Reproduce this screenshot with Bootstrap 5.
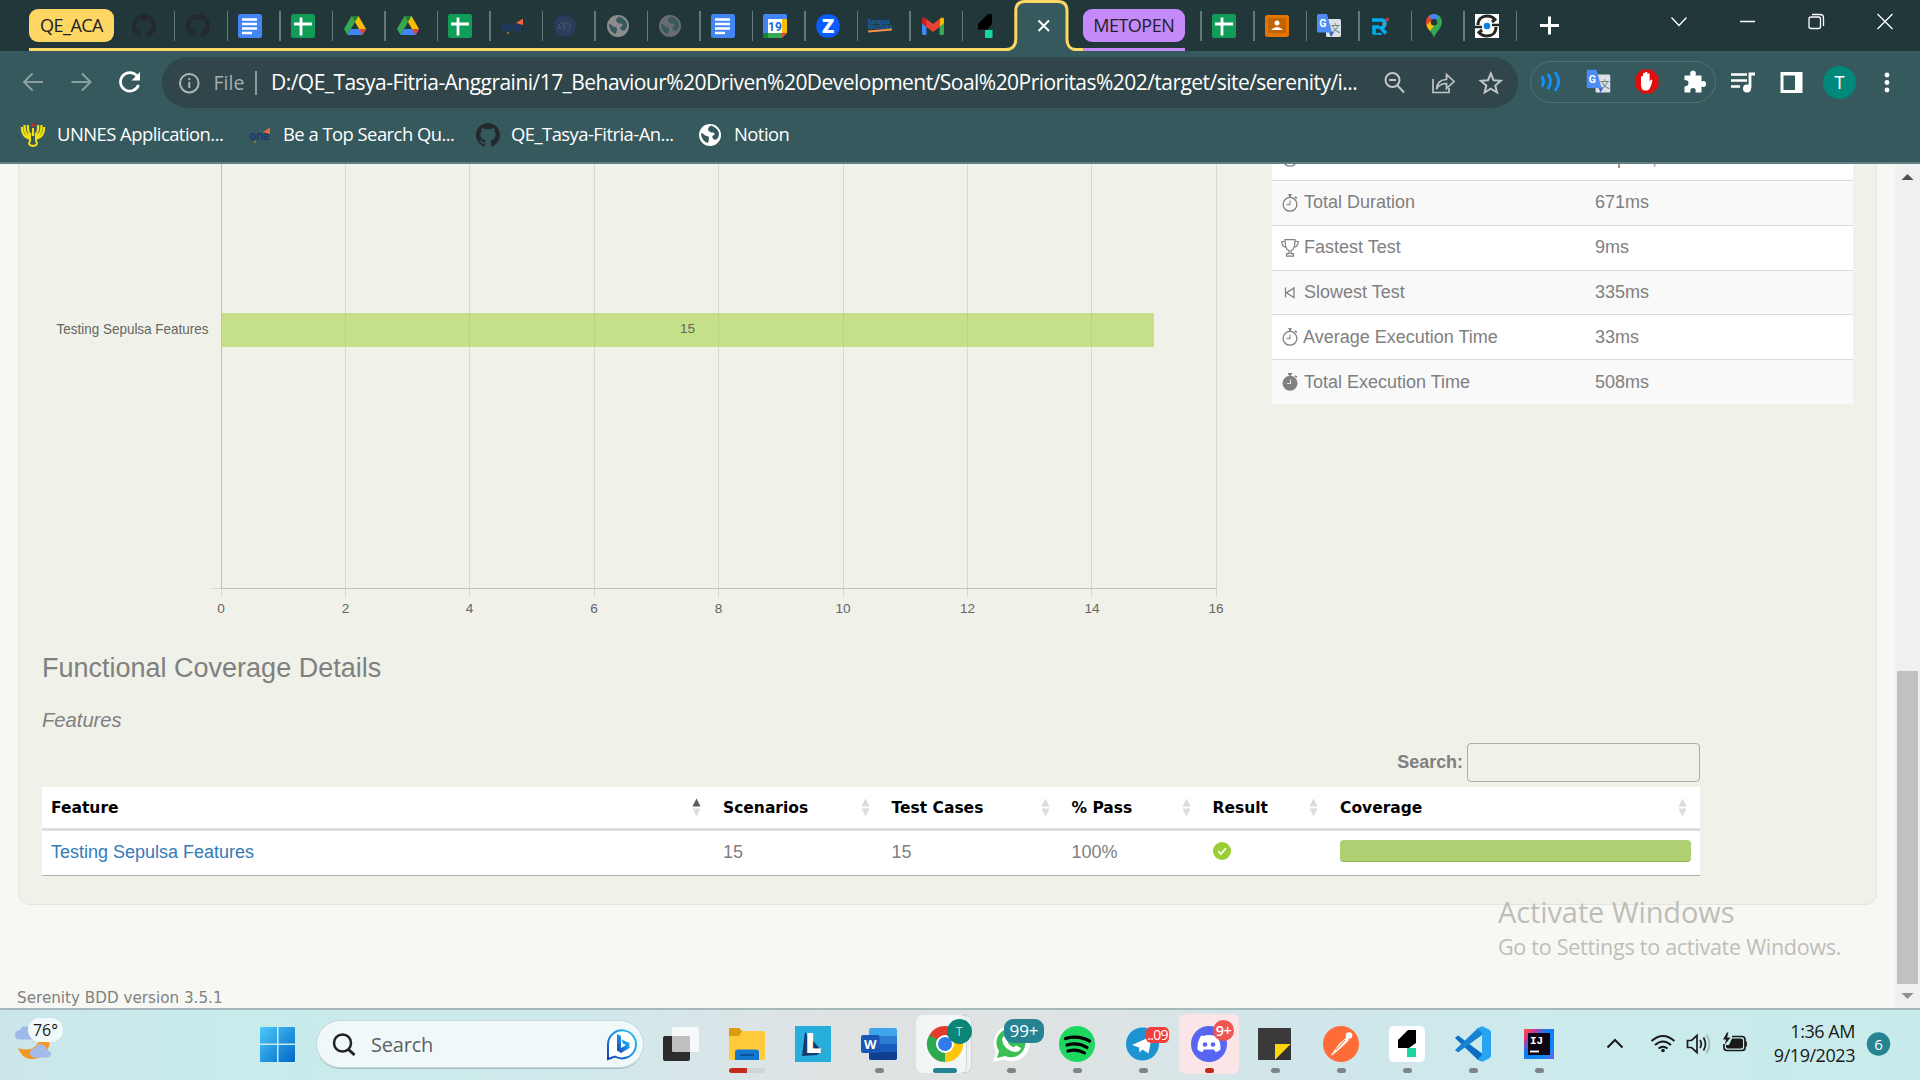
<!DOCTYPE html>
<html lang="en">
<head>
<meta charset="utf-8">
<title>Serenity Reports</title>
<link href="https://cdn.jsdelivr.net/npm/bootstrap@5.3.0/dist/css/bootstrap.min.css" rel="stylesheet">
<style>
body{width:1920px;height:1080px;overflow:hidden;font-family:"Open Sans","Noto Sans",sans-serif;background:#f7f8f3}
svg{display:block;flex:none;overflow:visible}
.strip{height:51px;background:#21373a}
.grp{height:51px;border-bottom:3px solid #fdd663}
.grp.violet{border-color:#c58af9}
.chip{height:33px;margin-top:9px;border-radius:9px;font-size:18px;line-height:33px;color:#202124;text-align:center;letter-spacing:-.5px;white-space:nowrap;flex:none}
.chip-y{width:85px;background:#fdd663;margin-right:8px}
.chip-v{width:101.5px;background:#c58af9}
.tabi{width:52.5px;height:51px;flex:none;padding:14px 0 0 11.4px;position:relative}
.tabi::after{content:"";position:absolute;right:-1px;top:11px;width:1.5px;height:30px;background:#66777a}
.tabi.nosep::after{display:none}
.tabi.nosep:nth-child(2){padding-left:10px}
.tabi.first::before{content:"";position:absolute;left:-1px;top:11px;width:1.5px;height:30px;background:#66777a}
.bar{height:62px;background:#36595d}
.omni{width:1356px;height:51px;border-radius:26px;background:#30464a;color:#fff;font-size:21px}
.url{width:1088px;letter-spacing:-.535px;white-space:nowrap;padding-top:2px}
.ext{width:186px;height:42px;border:1.5px solid #547175;border-radius:21px}
.marks{height:51px;background:#36595d;border-bottom:2px solid #628084;color:#fff;font-size:18.4px;letter-spacing:-.52px}
.marks span{white-space:nowrap;margin-top:-1px}
.view{height:844px;overflow:hidden;background:#f7f8f3;color:#808080;font-family:"Liberation Sans",Arial,sans-serif}
.panel{width:1859px;height:741px;margin-left:18px;padding-left:23px;background:#f0f1e8;border:1px solid #e4e5df;border-top:0;border-radius:0 0 12px 12px}
.facts{width:581px;height:240px;font-size:18px}
.facts .fact{height:44.8px;flex:none;background:#fff;border-top:1px solid #dcdcdc;padding-left:9px}
.facts .fact:nth-child(even){background:#f9f9f9}
.fact-name{width:314px}
.head3{font-size:27px;line-height:40px;height:40px}
.head4{font-size:20.2px;line-height:30px;margin-top:17px;font-style:italic;height:30px}
.find{width:1658px;margin-top:8px;height:39px;font-size:17.9px;font-weight:700}
.find-box{width:233px;height:39px;border:1px solid #aaa;border-radius:4px;background:transparent}
.grid{width:1658px;margin-top:5px;background:#fff;border-bottom:1px solid #abafab;font-size:18px}
.grid-head{height:44px;border-bottom:3px solid #ddd;color:#000;font:bold 15.5px "DejaVu Sans",sans-serif}
.grid-head>div,.grid-row>div{padding:0 9px;flex:none}
.grid-row{height:44px;padding-bottom:1px}
.c1{width:672px}.c2{width:168.5px}.c3{width:180px}.c4{width:141px}.c5{width:127.5px}.c6{width:369px}
.cov{height:22px;margin-top:-3px;border-radius:4px;background:#b0ce72;border-bottom:1.5px solid #95b35a;width:351px}
.foot{margin:82px 0 0 17px;font:15.2px/22px "DejaVu Sans",sans-serif;white-space:nowrap}
.sbar{width:25px;background:#f0f0f1}
.thumb{width:21px;height:313px;background:#c1c1c1;margin-top:488px}
.wm{position:absolute;left:1498px;top:890px;color:#bdbeba;white-space:nowrap}
.wm-a{font-size:29px;line-height:44px;letter-spacing:-.1px}
.wm-b{font-size:21.5px;line-height:26px;letter-spacing:-.26px}
.task{height:72px;border-top:2px solid #a7b8ba;background:linear-gradient(90deg,#cbe6ea 0,#c8ebec 12%,#cfe9eb 30%,#d9e5e8 37%,#e0e2e2 45%,#dde4e5 58%,#cfe6ea 68%,#cdeaec 80%,#c7ebeb 100%)}
.tk{width:66px;height:70px;flex:none;padding-top:8px;position:relative}
.dot{position:absolute;left:28.5px;top:58px;width:9px;height:5px;border-radius:3px;background:#7d8585}
.tile{position:absolute;border-radius:7px}
.pill{width:326px;height:46px;border-radius:23px;background:#f0f8fa;box-shadow:0 0 0 1px #c3d9dc,0 2px 0 #a9bfc1;font-size:20px;color:#5c6264;margin-left:22px}
.bdg{position:absolute;color:#fff;text-align:center;white-space:nowrap}
.clock{font-size:18px;line-height:24px;color:#1a1a1a;text-align:right;width:91px;letter-spacing:-.45px}
</style>
<script src="https://cdn.jsdelivr.net/npm/bootstrap@5.3.0/dist/js/bootstrap.bundle.min.js"></script>
</head>
<body class="d-flex flex-column m-0">
<svg width="0" height="0" class="position-absolute">
<defs>
<symbol id="gh" viewBox="0 0 16 16"><path d="M8 0C3.58 0 0 3.58 0 8c0 3.54 2.29 6.53 5.47 7.59.4.07.55-.17.55-.38v-1.49c-2.01.37-2.53-.49-2.69-.94-.09-.23-.48-.94-.82-1.13-.28-.15-.68-.52-.01-.53.63-.01 1.08.58 1.23.82.72 1.21 1.87.87 2.33.66.07-.52.28-.87.51-1.07-1.78-.2-3.64-.89-3.64-3.95 0-.87.31-1.59.82-2.15-.08-.2-.36-1.02.08-2.12 0 0 .67-.21 2.2.82a7.6 7.6 0 0 1 4 0c1.53-1.04 2.2-.82 2.2-.82.44 1.1.16 1.92.08 2.12.51.56.82 1.27.82 2.15 0 3.07-1.87 3.75-3.65 3.95.29.25.54.73.54 1.48v2.2c0 .21.15.46.55.38A8 8 0 0 0 16 8c0-4.42-3.58-8-8-8z"/></symbol>
<symbol id="docs" viewBox="0 0 24 24"><rect width="24" height="24" rx="2.5" fill="#4285f4"/><path d="M4 5.5h15M4 10h15M4 14.5h15M4 19h10" stroke="#fff" stroke-width="2.3"/></symbol>
<symbol id="sheet" viewBox="0 0 24 24"><rect width="24" height="24" rx="2.5" fill="#0f9d58"/><path d="M10 3.5v18M3 10h18" stroke="#fff" stroke-width="2.8"/></symbol>
<symbol id="drive" viewBox="0 0 24 24"><path d="M8.5 2 1 15l3.5 6L12 8z" fill="#34a853"/><path d="M8.5 2h7L23 15h-7z" fill="#fbbc04"/><path d="M8.500 2h7L12 8z" fill="#188038"/><path d="M8 15h15l-3.500 6h-15z" fill="#4285f4"/><path d="M16 15h7l-3.500 6z" fill="#ea4335"/></symbol>
<symbol id="globe" viewBox="0 0 24 24"><circle cx="12" cy="12" r="11"/><path d="M3 10c3 0 3 3 6 3s2 4 1 7c-4-1-7-5-7-10zM13 2.500c-3 2-4 4-1.500 6s4 0 5 2-3 1.500-2 4 3 3 5 1c3-4 2-10-6.500-13z" fill="#36595d"/></symbol>
<symbol id="trans" viewBox="0 0 24 24"><rect x="9" y="5" width="15" height="18" rx="1.500" fill="#dcdfe3"/><path d="M14 23l3-5h-5z" fill="#3a57c4"/><path d="M1.500 0H10l5 18.500H1.500Q0 18.500 0 17V1.500Q0 0 1.500 0z" fill="#4d8bf5"/><text x="2.200" y="13" font-family="Roboto,sans-serif" font-weight="700" font-size="10.500" fill="#fff">G</text><text x="13.300" y="18" font-family="Noto Sans CJK SC,sans-serif" font-size="10" fill="#607d8b">文</text></symbol>
<symbol id="one" viewBox="0 0 24 24"><text x="1" y="17" font-family="Open Sans,sans-serif" font-weight="700" font-size="11.500" textLength="20" lengthAdjust="spacingAndGlyphs" fill="#1d3a74">one</text><path d="M15 9l7-4.500V11z" fill="#f0643a"/><circle cx="7" cy="19" r="1" fill="#b08030"/></symbol>
<symbol id="kata" viewBox="0 0 24 24"><path d="M5 10 15 0h4v10L14 15.500H5z" fill="#000"/><path d="M12 16h7.500v8H12z" fill="#17d6a0"/></symbol>
<symbol id="sw" viewBox="0 0 16 18"><circle cx="8" cy="10.300" r="6.900" fill="none" stroke="#808080" stroke-width="1.300"/><path d="M6.500.8h3M8 1v2.200M13 2.800l1.800 1.600" stroke="#808080" stroke-width="1.700"/><path d="M8 6.500v4H4.500" fill="none" stroke="#999" stroke-width="1.300"/></symbol>
<symbol id="sort" viewBox="0 0 10 20"><path d="M5 0l4.500 9h-9z" fill="#dcdcdc"/><path d="M5 20l4.500-9h-9z" fill="#dcdcdc"/></symbol>
</defs>
</svg>

<!-- Tab strip -->
<div class="strip d-flex">
  <div class="grp d-flex" style="margin-left:29px">
    <div class="chip chip-y">QE_ACA</div>
    <div class="tabi nosep"><svg width="24" height="24" fill="#24292e"><use href="#gh"/></svg></div>
    <div class="tabi first"><svg width="24" height="24" fill="#24292e"><use href="#gh"/></svg></div>
    <div class="tabi"><svg width="24" height="24"><use href="#docs"/></svg></div>
    <div class="tabi"><svg width="24" height="24"><use href="#sheet"/></svg></div>
    <div class="tabi"><svg width="24" height="24"><use href="#drive"/></svg></div>
    <div class="tabi"><svg width="24" height="24"><use href="#drive"/></svg></div>
    <div class="tabi"><svg width="24" height="24"><use href="#sheet"/></svg></div>
    <div class="tabi"><svg width="24" height="24"><use href="#one"/></svg></div>
    <div class="tabi"><svg width="24" height="24" viewBox="0 0 24 24"><circle cx="12" cy="12" r="11.500" fill="#2b3d5b"/><circle cx="12" cy="12" r="11" fill="none" stroke="#1c2b42" stroke-dasharray="1.500 2"/><path d="M6 15c-1-5 2-8 4-6s-1 5-3 5m5-6c0 5 0 8-2 9m4-8c2-1 3 1 3 4s-2 4-3 3" stroke="#52627c" stroke-dasharray="2 1" fill="none"/></svg></div>
    <div class="tabi"><svg width="24" height="24" fill="#8c8c8c"><use href="#globe"/></svg></div>
    <div class="tabi"><svg width="24" height="24" fill="#686c6e"><use href="#globe"/></svg></div>
    <div class="tabi"><svg width="24" height="24"><use href="#docs"/></svg></div>
    <div class="tabi"><svg width="24" height="24" viewBox="0 0 24 24"><path d="M0 2q0-2 2-2h20q2 0 2 2v17l-5 5H2q-2 0-2-2z" fill="#4285f4"/><path d="M19 5h5v14h-5z" fill="#fbbc04"/><path d="M5 19h14v5H2q-2 0-2-2v-3z" fill="#188038"/><path d="M5 19h14v5H5z" fill="#34a853"/><path d="M19 19h5l-5 5z" fill="#ea4335"/><path d="M5 5h14v14H5z" fill="#fff"/><text x="12" y="16.500" text-anchor="middle" font-family="Roboto,sans-serif" font-weight="700" font-size="12" fill="#1a66d6">19</text></svg></div>
    <div class="tabi"><svg width="24" height="24" viewBox="0 0 24 24"><rect x=".3" y=".3" width="23.400" height="23.400" rx="10.500" fill="#0b5cff"/><text x="12" y="19" text-anchor="middle" font-family="Open Sans,sans-serif" font-weight="800" font-size="20" fill="#fff">Z</text></svg></div>
    <div class="tabi"><svg width="24" height="24" viewBox="0 0 24 24"><g font-family="Open Sans,sans-serif" font-weight="700" font-size="7" fill="#1466ae"><text x="0" y="10" textLength="22" lengthAdjust="spacingAndGlyphs">Kampus</text><text x="0" y="15" textLength="24" lengthAdjust="spacingAndGlyphs">Merdeka</text></g><path d="M0 17.500 24 15.500" stroke="#f0924c" stroke-width="2"/></svg></div>
    <div class="tabi"><svg width="24" height="24" viewBox="0 0 24 24"><path d="M1 5.500 5.500 9v12H2.500Q1 21 1 19.500z" fill="#4285f4"/><path d="M18.500 9 23 5.500v14Q23 21 21.500 21h-3z" fill="#34a853"/><path d="M18.500 5l2-1.300Q23 3 23 6v3l-4.500 4z" fill="#fbbc04"/><path d="M1 9V6q0-3.500 3-2l8 6 6.500-5v8L12 18l-6.500-5z" fill="#ea4335"/><path d="M1 6q0-4 4.500-1v8L1 9.500z" fill="#c5221f"/></svg></div>
    <div class="tabi nosep" style="width:44px"><svg width="24" height="24"><use href="#kata"/></svg></div>
  </div>
  <svg width="77" height="51" viewBox="0 0 77 51"><path d="M0 51v-1.500C6 49.500 9.800 46 9.800 39V11Q9.800 1.500 19 1.500h33q9 0 9 9.500v28c0 7 4 10.500 9 10.500h7V51z" fill="#36595d"/><path d="M0 49.500C6 49.500 9.800 46 9.800 39V11Q9.800 1.500 19 1.500h33q9 0 9 9.500v28c0 7 4 10.500 9 10.500h7" fill="none" stroke="#fdd663" stroke-width="3"/><path d="M32.500 20.500l10.500 10.500M43 20.500 32.500 31" stroke="#fff" stroke-width="2"/></svg>
  <div class="grp violet"><div class="chip chip-v">METOPEN</div></div>
  <div class="d-flex" style="margin-left:16.500px">
    <div class="tabi first"><svg width="24" height="24"><use href="#sheet"/></svg></div>
    <div class="tabi"><svg width="24" height="24" viewBox="0 0 24 24"><rect y="1" width="24" height="22" rx="2.500" fill="#e37400"/><rect x="3" y="4" width="18" height="15" fill="#c26401"/><circle cx="12" cy="9" r="2.500" fill="#fff"/><path d="M6 16q6-6 12 0z" fill="#fff"/></svg></div>
    <div class="tabi"><svg width="24" height="24"><use href="#trans"/></svg></div>
    <div class="tabi"><svg width="24" height="24" viewBox="0 0 24 24"><path d="M2 6h9q4 0 4 3.500T11 14l5 5.500M4 20.500V13h5" fill="none" stroke="#00aeef" stroke-width="3.500"/><path d="M4 20l6-1 2 1.500z" fill="#00aeef" stroke="#00aeef"/><path d="M15 5.500h4.500M17.300 3.300v4.500" stroke="#d3343c" stroke-width="1.500"/><path d="M12 9l4 1-3 1z" fill="#ff8a3c"/></svg></div>
    <div class="tabi"><svg width="24" height="24" viewBox="0 0 24 24"><path d="M12 24c-1-6-8-9-8-16L12 0c5 0 8 4 8 8 0 7-7 10-8 16z" fill="#34a853"/><path d="M5 12l10-10L12 .2Q7 0 5 4q-2 4 0 8z" fill="#ea4335"/><path d="M7 2q5-4 10 .500L12 8z" fill="#4285f4"/><path d="M4.500 11 9 7l3 5-4 5q-3-3-3.500-6z" fill="#fbbc04"/><circle cx="12" cy="8.300" r="3.200" fill="#21373a"/></svg></div>
    <div class="tabi"><svg width="24" height="24" viewBox="0 0 24 24"><rect width="24" height="24" fill="#fff"/><path d="M3 11C3 5 7 2 12 2q5 0 8 3.500L17 8M21 13c0 6-4 9-9 9q-5 0-8-3.500L7 16" fill="none" stroke="#262626" stroke-width="3"/><path d="M0 13h7M17 11h7" stroke="#262626" stroke-width="2.500"/><circle cx="12" cy="12" r="3.300" fill="#0a80e4"/></svg></div>
  </div>
  <svg width="404" height="51" viewBox="1516 0 404 51" fill="none" stroke="#fff"><path d="M1540 25.500h19M1549.500 16.500v18" stroke-width="3"/><g stroke-width="1.300"><path d="M1671.500 17.500l7.500 8 7.500-8M1740 21.500h15M1877.500 14l15 15M1892.500 14l-15 15"/><rect x="1809" y="17" width="11.500" height="11.500" rx="2"/><path d="M1812 14.500h8q3.500 0 3.500 3.500v8"/></g></svg>
</div>

<!-- Address bar -->
<div class="bar d-flex align-items-center">
  <svg width="162" height="62" viewBox="0 51 162 62" fill="none" stroke="#8ba0a2" stroke-width="2"><path d="M43 82H24.500M32.500 73.500 24 82l8.500 8.500M71.500 82H90M82 73.500l8.500 8.500-8.500 8.500"/><path d="M137 76a9.300 9.300 0 1 0 1.500 9" stroke="#fff" stroke-width="2.700"/><path d="M140 72v8.500h-8.500z" fill="#fff" stroke="none"/></svg>
  <div class="omni d-flex align-items-center">
    <svg width="109" height="51" viewBox="162 57 109 51" fill="none" stroke="#aeb5b7" stroke-width="2"><circle cx="189.300" cy="83.200" r="9.300"/><path d="M189.300 82v6M189.300 78v2.200"/><path d="M256 71v24" stroke="#8d999b"/><text x="213.500" y="90" font-family="Open Sans,sans-serif" font-size="20.500" textLength="31" lengthAdjust="spacingAndGlyphs" fill="#a5adaf" stroke="none">File</text></svg>
    <div class="url">D:/QE_Tasya-Fitria-Anggraini/17_Behaviour%20Driven%20Development/Soal%20Prioritas%202/target/site/serenity/i...</div>
    <svg width="150" height="51" viewBox="1359 57 150 51" fill="none" stroke="#c0c5c6" stroke-width="2"><circle cx="1392.500" cy="80" r="7"/><path d="M1397.500 85.500l6.500 7M1389 80h7"/><path d="M1433 79v13.500h16V88M1436.500 89q1-9.500 10-9.500v-5l7.500 7-7.500 7v-5q-7 0-10 5.500z" stroke-width="1.700"/><path d="M1490.800 73.500l2.800 6.700 7.200.6-5.500 4.700 1.700 7-6.200-3.800-6.200 3.800 1.700-7-5.500-4.700 7.200-.6z" stroke-width="2"/></svg>
  </div>
  <div class="ext" style="margin-left:12px"><svg width="183" height="39" viewBox="1531.500 63.500 183 39"><g fill="none" stroke="#1193fa" stroke-width="2.800" stroke-linecap="round"><path d="M1543 79q2 4 0 8M1549 76.500q4 6.500 0 13M1556 74.500q6.500 8.500 0 17"/></g><use href="#trans" x="1587" y="71" width="24" height="24"/><path d="M1642.500 71h9.500l7 7v10l-7 7h-9.500l-7-7V78z" fill="#e40d0d"/><path d="M1641.500 86v-8q1.300-1.500 2 0v-3q1.300-1.500 2.200 0v-1q1.300-1.500 2.200 0v1.500q1.300-1.500 2.200 0V83l1.500-2q1.700 0 1.200 1.500-2 9-5 9.500h-3q-3-.5-3.300-6z" fill="#fff"/><path d="M1685 77h6q-1.500-4.500 2.500-5 4 .5 2.500 5h6v6q4.500-1.500 4.500 2.500t-4.500 2.500v6h-6q1-4.500-2.500-4.500t-2.500 4.500h-6v-6q4-.5 4-3.500t-4-3z" fill="#fff"/></svg></div>
  <svg width="204" height="62" viewBox="1716 51 204 62"><path d="M1731 74.500h16M1731 80.500h16M1731 86.500h9" stroke="#fff" stroke-width="2.500"/><path d="M1750 88V74h5" stroke="#fff" stroke-width="2.800" fill="none"/><circle cx="1747" cy="88.500" r="4" fill="#fff"/><path d="M1780.500 72h22v21h-22zM1783.500 75.500v14.500h11.500V75.500z" fill="#fff" fill-rule="evenodd"/><circle cx="1839.500" cy="82.500" r="16.500" fill="#00897b"/><text x="1839.500" y="89" text-anchor="middle" font-family="Roboto,sans-serif" font-size="17.500" fill="#fff">T</text><g fill="#fff"><circle cx="1887" cy="75" r="2.400"/><circle cx="1887" cy="82.500" r="2.400"/><circle cx="1887" cy="90" r="2.400"/></g></svg>
</div>

<!-- Bookmarks -->
<div class="marks d-flex align-items-center" style="padding-left:21px;padding-bottom:6px">
  <svg width="24" height="24" viewBox="0 0 24 24" fill="none" stroke="#f1df12"><path d="M9 16Q1 14 .8 4M9 14Q3 11 3.500 2M10 12Q6 9 7 2M15 16q8-2 8.200-12M15 14q6-3 5.500-12M14 12q4-3 3-10" stroke-width="2.300"/><path d="M9 10v8q-3 4 3 5 6-1 3-5v-8M12 5v8" stroke-width="2"/><circle cx="12" cy="2" r="1.700" fill="#d22" stroke="none"/></svg>
  <span style="margin-left:12px;width:191px">UNNES Application...</span>
  <svg width="24" height="24"><use href="#one"/></svg>
  <span style="margin-left:11px;width:193px">Be a Top Search Qu...</span>
  <svg width="24" height="24" fill="#24292e"><use href="#gh"/></svg>
  <span style="margin-left:11px;width:187px">QE_Tasya-Fitria-An...</span>
  <svg width="24" height="24" fill="#fff"><use href="#globe"/></svg>
  <span style="margin-left:12px">Notion</span>
</div>

<!-- Report page -->
<div class="view d-flex">
  <div class="flex-grow-1">
    <div class="panel">
      <div class="d-flex">
        <svg width="1230" height="484" viewBox="42 164 1230 484" font-family="Liberation Sans,Arial,sans-serif" font-size="13.600" fill="#666">
          <path d="M345.500 164v433.500M469.500 164v433.500M594.500 164v433.500M718.500 164v433.500M843.500 164v433.500M967.500 164v433.500M1091.500 164v433.500M1216.500 164v433.500M221.500 589v8.500M212 588.500h9" stroke="#d7d8d0"/>
          <path d="M221 313h933v34H221z" fill="#9bd02b" fill-opacity=".5"/>
          <path d="M221.500 164v424.500h995" fill="none" stroke="#bfc0b9"/>
          <text x="56.500" y="333.700" font-size="14.400" textLength="152" lengthAdjust="spacingAndGlyphs">Testing Sepulsa Features</text>
          <g text-anchor="middle"><text x="687.500" y="333">15</text><text x="221" y="613">0</text><text x="345.500" y="613">2</text><text x="469.500" y="613">4</text><text x="594" y="613">6</text><text x="718.500" y="613">8</text><text x="843" y="613">10</text><text x="967.500" y="613">12</text><text x="1092" y="613">14</text><text x="1216" y="613">16</text></g>
        </svg>
        <div class="facts d-flex flex-column justify-content-end">
          <div class="fact d-flex align-items-center"><div class="fact-name d-flex align-items-center"><svg width="18" height="18" viewBox="-1 0 18 18"><use href="#sw" width="16" height="18"/></svg><span style="margin-left:5px">Tests Finished</span></div><div>Sep 19, 2023 01:34:38</div></div>
          <div class="fact d-flex align-items-center"><div class="fact-name d-flex align-items-center"><svg width="18" height="18"><use href="#sw"/></svg><span style="margin-left:5px">Total Duration</span></div><div>671ms</div></div>
          <div class="fact d-flex align-items-center"><div class="fact-name d-flex align-items-center"><svg width="18" height="18" viewBox="0 0 18 18" fill="none" stroke="#808080" stroke-width="1.200"><path d="M4 .7h10q0 10-4 11v3h2.500v2.500h-7v-2.500H8v-3Q4 10.700 4 .7zM4 2.500H.8q0 5 4.500 6M14 2.500h3.200q0 5-4.500 6"/></svg><span style="margin-left:5px">Fastest Test</span></div><div>9ms</div></div>
          <div class="fact d-flex align-items-center"><div class="fact-name d-flex align-items-center"><svg width="18" height="18" viewBox="0 0 18 18" fill="none" stroke="#808080" stroke-width="1.300"><path d="M4.500 3.500v10M13 4v9.500L5.500 8.700z"/></svg><span style="margin-left:5px">Slowest Test</span></div><div>335ms</div></div>
          <div class="fact d-flex align-items-center"><div class="fact-name d-flex align-items-center"><svg width="18" height="18"><use href="#sw"/></svg><span style="margin-left:4px">Average Execution Time</span></div><div>33ms</div></div>
          <div class="fact d-flex align-items-center"><div class="fact-name d-flex align-items-center"><svg width="18" height="18" viewBox="-1 0 18 18"><circle cx="8" cy="10.300" r="7.500" fill="#808080"/><path d="M6 .8h4M8 1v2.200M13 2.800l1.800 1.600" stroke="#808080" stroke-width="1.700"/><path d="M8.500 6.500v4H5" fill="none" stroke="#ddd" stroke-width="1.200"/></svg><span style="margin-left:5px">Total Execution Time</span></div><div>508ms</div></div>
        </div>
      </div>
      <div class="head3">Functional Coverage Details</div>
      <div class="head4">Features</div>
      <div class="find d-flex align-items-center justify-content-end"><label class="me-1" for="q">Search:</label><input id="q" class="find-box"></div>
      <div class="grid d-block">
        <div class="grid-head d-flex align-items-center">
          <div class="c1 d-flex justify-content-between align-items-center"><span>Feature</span><svg class="me-1" width="9" height="19" viewBox="0 0 10 20"><path d="M5 0l4.500 9h-9z" fill="#5c5c5c"/><path d="M5 20l4.500-9h-9z" fill="#dcdcdc"/></svg></div>
          <div class="c2 d-flex justify-content-between align-items-center"><span>Scenarios</span><svg class="me-1" width="9" height="19"><use href="#sort"/></svg></div>
          <div class="c3 d-flex justify-content-between align-items-center"><span>Test Cases</span><svg class="me-1" width="9" height="19"><use href="#sort"/></svg></div>
          <div class="c4 d-flex justify-content-between align-items-center"><span>% Pass</span><svg class="me-1" width="9" height="19"><use href="#sort"/></svg></div>
          <div class="c5 d-flex justify-content-between align-items-center"><span>Result</span><svg class="me-1" width="9" height="19"><use href="#sort"/></svg></div>
          <div class="c6 d-flex justify-content-between align-items-center"><span>Coverage</span><svg class="me-1" width="9" height="19"><use href="#sort"/></svg></div>
        </div>
        <div class="grid-row d-flex align-items-center">
          <div class="c1" style="color:#337ab7">Testing Sepulsa Features</div><div class="c2">15</div><div class="c3">15</div><div class="c4">100%</div>
          <div class="c5"><svg width="18" height="18" viewBox="0 0 18 18" style="margin-top:-3px"><circle cx="9" cy="9" r="9" fill="#9acd32"/><path d="M5.200 9.200l2.800 2.800 5-6" fill="none" stroke="#fff" stroke-width="1.700"/></svg></div>
          <div class="c6"><div class="cov"></div></div>
        </div>
      </div>
    </div>
    <div class="foot">Serenity BDD version 3.5.1</div>
  </div>
  <div class="sbar d-flex flex-column align-items-center">
    <svg width="25" height="19" viewBox="0 0 25 19"><path d="M12.500 10l6 6h-12z" fill="#505050"/></svg>
    <div class="thumb"></div>
    <svg width="25" height="24" viewBox="0 0 25 24"><path d="M12.500 15l6-6h-12z" fill="#8f8f8f"/></svg>
  </div>
</div>
<div class="wm"><div class="wm-a">Activate Windows</div><div class="wm-b">Go to Settings to activate Windows.</div></div>

<!-- Taskbar -->
<div class="task d-flex">
  <svg width="260" height="70" viewBox="0 1010 260 70"><path d="M43 1027q10 8 5 22-6 11-18 10-8-1-12-11 18 6 23-12z" fill="#f6961e"/><path d="M19 1039.500q-4 0-4-4.500t5-5q2-5 7-3.500 5 1 4 6 5 1 5 3.500t-4 3.500z" fill="#9fb9ea"/><path d="M34 1057.500q-4 0-4-4.500t5-5q2-5 7-3.500 5 1 4.500 5.500 4.500 1 4.500 4t-4 3.500z" fill="#a4bbea"/><rect x="28" y="1018" width="35" height="24" rx="12" fill="#f1f9fa"/><text x="33" y="1036" font-family="Open Sans,sans-serif" font-size="16.500" textLength="25" lengthAdjust="spacingAndGlyphs" fill="#1b1b1b">76°</text></svg>
  <svg width="35" height="70" viewBox="0 0 35 70"><defs><linearGradient id="wn" gradientUnits="userSpaceOnUse" x1="0" y1="17" x2="35" y2="52"><stop stop-color="#4cc9f9"/><stop offset="1" stop-color="#0068c8"/></linearGradient></defs><path d="M1 17h16v16.500H0V18q0-1 1-1zM18.500 17H34q1 0 1 1v15.500H18.500zM0 35h17v17H1q-1 0-1-1zM18.500 35H35v16q0 1-1 1H18.500z" fill="url(#wn)"/></svg>
  <div class="pill d-flex align-items-center" style="margin-top:11px">
    <svg width="54" height="46" viewBox="317 1021 54 46" fill="none" stroke="#222" stroke-width="2.500"><circle cx="342.500" cy="1043" r="8.500"/><path d="M348.500 1049.500l6 5.500" stroke-width="3"/></svg>
    <span class="flex-grow-1" style="letter-spacing:-.2px;padding-top:1px">Search</span>
    <svg width="36" height="36" viewBox="0 0 36 36" style="margin-right:3.500px"><defs><linearGradient id="bg1" x1="1" x2="0" y2="1"><stop stop-color="#25c9e8"/><stop offset=".5" stop-color="#1a8be8"/><stop offset="1" stop-color="#1a3fae"/></linearGradient></defs><path d="M4 33V18a14 14 0 1 1 7 12.500z" fill="#fff" stroke="url(#bg1)" stroke-width="2"/><path d="M13 8l4 2v12l5-3-3-1.500-1.500-4 8 3.500v5L17 27l-4-2.500z" fill="url(#bg1)"/></svg>
  </div>
  <div class="d-flex" style="margin-left:5px">
    <div class="tk"><svg width="66" height="52" viewBox="0 0 66 52"><rect x="15" y="18" width="27" height="25" rx="2" fill="#2c2c2c"/><rect x="24" y="9" width="27" height="25" rx="2" fill="#fafafa" fill-opacity=".92"/><path d="M24 18h18v16H26q-2 0-2-2z" fill="#bfbfbf"/></svg></div>
    <div class="tk"><svg width="66" height="52" viewBox="0 0 66 52"><path d="M15 11q0-1 1-1h9l4 4v6H15z" fill="#dd9a09"/><path d="M28 13h21q2 0 2 2v25q0 2-2 2H17q-2 0-2-2V18h10z" fill="#ffcb3c"/><path d="M21 42V34q0-2.500 3-2.500h18q3 0 3 2.500v8z" fill="#1277cf"/><path d="M26 37h14" stroke="#0a4e94" stroke-width="1.800"/></svg><span class="dot" style="left:15px;width:36px;background:linear-gradient(90deg,#c42b1c 50%,#ccd6d7 50%)"></span></div>
    <div class="tk"><svg width="66" height="52" viewBox="0 0 66 52"><rect x="15" y="8" width="36" height="36" fill="#28aedd"/><path d="M25 14l-3 24 15-1 5-4z" fill="#17386a"/><text x="25" y="35" font-family="Open Sans,sans-serif" font-weight="800" font-size="29" fill="#fff">L</text></svg></div>
    <div class="tk"><svg width="66" height="52" viewBox="0 0 66 52"><rect x="23" y="10" width="28" height="32" rx="2" fill="#41a5ee"/><path d="M23 18h28v8H23z" fill="#2b7cd3"/><path d="M23 26h28v8H23z" fill="#185abd"/><path d="M23 34h28v6q0 2-2 2H25q-2 0-2-2z" fill="#103f91"/><rect x="15" y="17" width="18.500" height="18" rx="2" fill="#1a56b6"/><text x="24.200" y="31" text-anchor="middle" font-family="Open Sans,sans-serif" font-weight="700" font-size="13" fill="#fff">W</text></svg><span class="dot"></span></div>
    <div class="tk"><div class="tile" style="left:4px;top:5px;width:56px;height:58px;background:#edf1f2;border:1px solid #ccd3d4"></div><div class="tile" style="left:4px;top:5px;width:51px;height:58px;background:#f4f5f6;border-right:1px solid #d2d7d8"></div>
      <svg class="position-relative" width="66" height="52" viewBox="0 0 66 52"><path d="M33 26 17.400 17A18 18 0 0 1 48.600 17z" fill="#e33b2e"/><path d="M33 26 17.400 17A18 18 0 0 0 33 44z" fill="#2da94f"/><path d="M33 26 48.600 17A18 18 0 0 1 33 44z" fill="#fdc60a"/><path d="M17.400 17 26 31l7-5zM48.600 17H33v9z" fill="#e33b2e"/><path d="M17.400 17 25 31l8-5z" fill="#2da94f"/><circle cx="33" cy="26" r="9" fill="#fff"/><circle cx="33" cy="26" r="7" fill="#2f7bea"/></svg>
      <span class="bdg rounded-circle" style="left:34.500px;top:9px;width:25px;height:25px;background:#0a8577;font-size:13px;line-height:25px;color:#b9dcd8">T</span><span class="dot" style="left:21px;width:24px;background:#258392"></span></div>
    <div class="tk"><svg width="66" height="52" viewBox="0 0 66 52"><path d="M15 44l3-10a18 18 0 1 1 8 7.500z" fill="#fff"/><path d="M19 40l2-7a14.500 14.500 0 1 1 6 5z" fill="#3cc052"/><path d="M26 18q3-2 5 3l-1.500 3q2 4 6 5.500l2.500-2 5 2.500q-1 4-6 4-11-2-13-12 0-2.500 2-4z" fill="#fff"/></svg><span class="bdg" style="left:26px;top:9px;width:40px;height:24px;border-radius:9px;background:#258392;font-size:17px;line-height:24px;letter-spacing:-.1px">99+</span><span class="dot"></span></div>
    <div class="tk"><svg width="66" height="52" viewBox="0 0 66 52"><circle cx="33" cy="26" r="18" fill="#1ed760"/><path d="M21.500 20.500q13-3.500 24 2.500M23 27q11-3 20 2.500M24 33q9-2.500 16.500 2" fill="none" stroke="#000" stroke-width="3.200" stroke-linecap="round"/></svg><span class="dot"></span></div>
    <div class="tk"><svg width="66" height="52" viewBox="0 0 66 52"><circle cx="32.500" cy="26" r="16.500" fill="#1d93d2"/><path d="M22 27l20-9-3.500 17.500-6-4-3 3-.5-5z" fill="#fff"/></svg><span class="bdg" style="left:36px;top:17px;width:23px;height:16px;border-radius:5px;background:#f03e3e;font-size:14px;line-height:16px;letter-spacing:-.7px">..09</span><span class="dot"></span></div>
    <div class="tk"><div class="tile" style="left:3px;top:4px;width:60px;height:60px;background:#fbe5e7"></div><svg class="position-relative" width="66" height="52" viewBox="0 0 66 52"><circle cx="33" cy="26" r="18" fill="#5865f2"/><path d="M27 18q6-2 12 0l2-.5q4 7 3.500 14-3 2.500-5 2.500l-1.500-2.500h-10L26.500 34q-2.500 0-5-2.500-.5-7 3.500-14z" fill="#fff"/><circle cx="29" cy="26.500" r="2.300" fill="#5865f2"/><circle cx="37" cy="26.500" r="2.300" fill="#5865f2"/></svg><span class="bdg rounded-circle" style="left:37px;top:10px;width:21px;height:21px;background:#ee5555;font-size:14.500px;font-weight:600;line-height:21px;letter-spacing:-.5px">9+</span><span class="dot" style="background:#c42b1c"></span></div>
    <div class="tk"><svg width="66" height="52" viewBox="0 0 66 52"><rect x="16" y="10" width="33" height="32" rx="1" fill="#3a3a3a"/><path d="M33 26h16L33 42z" fill="#ffd60a"/><path d="M33 42l16-16v16z" fill="#333"/></svg><span class="dot"></span></div>
    <div class="tk"><svg width="66" height="52" viewBox="0 0 66 52"><circle cx="33" cy="26" r="18" fill="#ff6c37"/><path d="M23 37l8-11 8-7 2 3-7 7-10 8.500z" fill="#fff"/><circle cx="41" cy="17.500" r="3.300" fill="#fff"/><path d="M28 32l9-10" stroke="#ff6c37"/></svg><span class="dot"></span></div>
    <div class="tk"><svg width="66" height="52" viewBox="0 0 66 52"><rect x="15" y="8" width="36" height="36" rx="5" fill="#fff"/><path d="M24 22l10-10h8v13l-7 5H24z" fill="#000"/><path d="M33 30h9v9h-9z" fill="#17d6a0"/></svg><span class="dot"></span></div>
    <div class="tk"><svg width="66" height="52" viewBox="0 0 66 52"><path d="M15 20l3-2.500 24 18V43L38 42z" fill="#0a6fc0"/><path d="M15 32l3 2.500L42 17V9l-4 1z" fill="#1583d6"/><path d="M42 8l7 3.500q2 1 2 3v23q0 2-2 3L42 44l-4-3 4-4V15l-4-4z" fill="#27a4f2"/></svg><span class="dot"></span></div>
    <div class="tk"><svg width="66" height="52" viewBox="0 0 66 52"><defs><linearGradient id="ij" x2="1" y2="1"><stop stop-color="#fc5c3c"/><stop offset=".18" stop-color="#e0318a"/><stop offset=".4" stop-color="#0a7cf0"/><stop offset=".8" stop-color="#1387f5"/><stop offset="1" stop-color="#7b5cf0"/></linearGradient></defs><rect x="18" y="11" width="30" height="30" fill="url(#ij)"/><path d="M22 15h22v22H22z" fill="#0c0410"/><text x="24" y="26" font-family="Liberation Mono,monospace" font-weight="700" font-size="11" fill="#fff">IJ</text><path d="M24 33.500h9" stroke="#fff" stroke-width="1.800"/></svg><span class="dot"></span></div>
  </div>
  <svg width="192" height="70" viewBox="1572 1010 192 70" fill="none" stroke="#1a1a1a" stroke-width="2"><path d="M1607.500 1047.500l7.500-7.500 7.500 7.500"/><path d="M1651.500 1041q11.500-10 23 0M1655 1045q8-7 16 0M1658.500 1048.500q4.500-3.500 9 0" /><circle cx="1663" cy="1050.500" r="1.800" fill="#1a1a1a" stroke="none"/><path d="M1687.500 1040.500h4l5.500-5v17l-5.500-5h-4zM1700 1040q2.500 4 0 8M1703.500 1037.500q4 6.500 0 13" stroke-width="1.700"/><path d="M1706.500 1035q6 9 0 18" stroke="#9fb5b6" stroke-width="1.700"/><path d="M1732 1036.500h10q3 0 3 3v8q0 3-3 3h-15q-3 0-3-3V1044M1746 1041.500v5" stroke-width="1.700"/><path d="M1732 1038.500h9q2 0 2 2v6q0 2-2 2h-13q-2 0-2-2V1045h3zM1727 1032.500l-4 7h3l-1 5 5.500-7h-3.500l1.500-5z" fill="#1a1a1a" stroke="none"/></svg>
  <div class="clock" style="padding-top:9px">1:36 AM<br>9/19/2023</div>
  <svg width="49" height="70" viewBox="1855 1010 49 70"><circle cx="1878.500" cy="1044" r="11.700" fill="#258392"/><text x="1878.500" y="1049.500" text-anchor="middle" font-family="Open Sans,sans-serif" font-size="15" fill="#fff">6</text></svg>
</div>
</body>
</html>
